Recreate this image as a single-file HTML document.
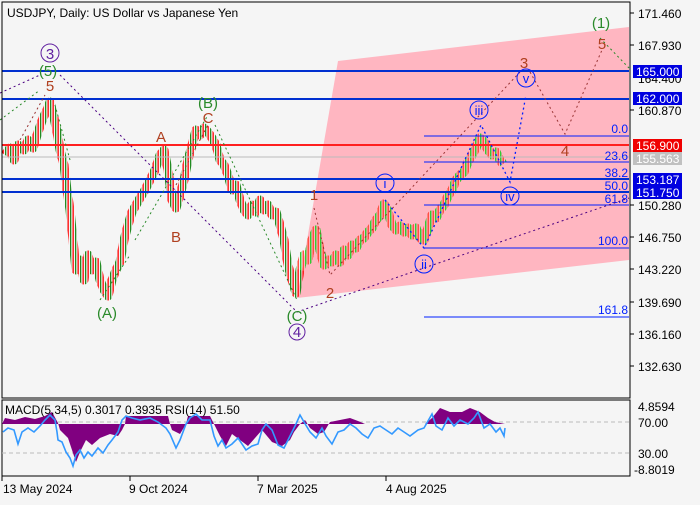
<!DOCTYPE html><html><head><meta charset="utf-8"><style>
body{margin:0;background:#f5f5f5;width:700px;height:500px;overflow:hidden;font-family:"Liberation Sans",sans-serif}
svg text{font-family:"Liberation Sans",sans-serif}
</style></head><body>
<svg width="700" height="500" xmlns="http://www.w3.org/2000/svg">
<defs>
<pattern id="pc" width="5" height="6" patternUnits="userSpaceOnUse"><rect x="0" width="1.3" height="6" fill="#228b22"/><rect x="2.5" width="1.3" height="6" fill="#ff0000"/></pattern>
<pattern id="pp" width="5" height="6" patternUnits="userSpaceOnUse"><rect x="0" width="1.3" height="6" fill="#33cc33"/><rect x="2.5" width="1.3" height="6" fill="#ff5040"/></pattern>
</defs>
<rect width="700" height="500" fill="#f5f5f5"/>
<polygon points="338,61 629,27 629,260 297,298" fill="#ffb6c1"/>
<polyline fill="none" stroke="url(#pc)" stroke-width="9" stroke-linejoin="round" points="5,155 10,148 14,160 18,145 24,150 28,140 33,148 38,132 43,118 47,110 50,102 54,118 57,132 60,150 64,165 67,190 70,210 73,240 76,270 80,260 84,280 88,255 92,270 96,262 100,280 104,290 108,296 112,280 116,270 120,262 124,240 128,225 132,212 136,205 140,198 145,190 150,180 155,170 160,155 164,150 168,170 172,200 176,208 180,195 184,180 188,160 192,145 196,130 200,135 204,128 208,132 212,138 216,145 220,160 224,165 228,175 232,190 236,185 240,200 244,210 248,215 252,205 256,212 260,200 264,210 268,205 272,215 276,212 280,225 284,240 288,265 292,280 296,293 300,270 304,255 308,260 312,240 316,230 320,250 324,265 328,260 332,262 336,255 340,262 344,250 348,255 352,245 356,248 360,240 364,238 368,232 372,228 376,220 380,215 384,204 388,212 392,225 396,230 400,226 404,232 408,228 412,235 416,228 420,238 424,240 428,228 432,215 436,218 440,210 444,205 448,196 452,190 456,180 460,175 464,172 468,162 472,155 476,148 480,138 484,142 488,150 492,155 496,152 500,160 503,164"/>
<polyline fill="none" stroke="url(#pp)" stroke-width="9" stroke-linejoin="round" points="300,270 304,255 308,260 312,240 316,230 320,250 324,265 328,260 332,262 336,255 340,262 344,250 348,255 352,245 356,248 360,240 364,238 368,232 372,228 376,220 380,215 384,204 388,212 392,225 396,230 400,226 404,232 408,228 412,235 416,228 420,238 424,240 428,228 432,215 436,218 440,210 444,205 448,196 452,190 456,180 460,175 464,172 468,162 472,155 476,148 480,138 484,142 488,150 492,155 496,152 500,160 503,164"/>
<g stroke-width="2">
<line x1="2" y1="71" x2="629" y2="71" stroke="#0030d0"/>
<line x1="2" y1="99" x2="629" y2="99" stroke="#0030d0"/>
<line x1="2" y1="145" x2="629" y2="145" stroke="#ff2020"/>
<line x1="2" y1="179" x2="629" y2="179" stroke="#0030d0"/>
<line x1="2" y1="192" x2="629" y2="192" stroke="#0030d0"/>
</g>
<line x1="2" y1="157" x2="629" y2="157" stroke="#bbb" stroke-width="1"/>
<g stroke="#0020ff" stroke-width="1">
<line x1="424" y1="136" x2="629" y2="136"/><line x1="424" y1="162" x2="629" y2="162"/>
<line x1="424" y1="205" x2="629" y2="205"/><line x1="424" y1="248" x2="629" y2="248"/>
<line x1="424" y1="317" x2="629" y2="317"/>
</g>
<g fill="#0020ff" font-size="12" text-anchor="end">
<text x="628" y="133">0.0</text><text x="628" y="160">23.6</text><text x="628" y="177">38.2</text>
<text x="628" y="190">50.0</text><text x="628" y="203">61.8</text><text x="628" y="245">100.0</text><text x="628" y="314">161.8</text>
</g>
<g fill="none" stroke-dasharray="2,3" stroke-width="1">
<polyline stroke="#4b0082" points="0,93 40,75"/>
<polyline stroke="#4b0082" points="60,75 297,312 424,268 629,198"/>
<polyline stroke="#2a8a2a" points="0,120 40,90"/>
<polyline stroke="#2a8a2a" points="55,105 70,160"/>
<polyline stroke="#2a8a2a" points="100,300 130,255"/>
<polyline stroke="#2a8a2a" points="135,240 208,115"/>
<polyline stroke="#2a8a2a" points="215,125 297,300"/>
<polyline stroke="#2a8a2a" points="600,38 629,68"/>
<polyline stroke="#993333" points="20,140 45,95"/>
<polyline stroke="#993333" points="176,185 208,125"/>
<polyline stroke="#993333" points="314,208 330,275 520,72"/>
<polyline stroke="#993333" points="530,72 565,134 602,50"/>
<polyline stroke="#0020ff" stroke-width="1.3" points="385,200 424,248 481,125 510,182 526,95"/>
</g>
<g font-size="15" text-anchor="middle">
<circle cx="50" cy="53" r="9" fill="#f5f5f5" stroke="#6020a0"/><text x="50" y="59" fill="#6020a0">3</text>
<text x="48" y="76" fill="#2a8a2a">(5)</text><text x="50" y="91" fill="#b04020">5</text>
<text x="161" y="142" fill="#b04020">A</text><text x="176" y="242" fill="#b04020">B</text>
<text x="208" y="123" fill="#b04020">C</text><text x="208" y="108" fill="#2a8a2a">(B)</text>
<text x="107" y="318" fill="#2a8a2a">(A)</text><text x="297" y="321" fill="#2a8a2a">(C)</text>
<circle cx="297" cy="332" r="8" fill="none" stroke="#6020a0"/><text x="297" y="337" fill="#6020a0">4</text>
<text x="314" y="200" fill="#b04020">1</text><text x="330" y="298" fill="#b04020">2</text>
<text x="524" y="68" fill="#b04020">3</text><text x="565" y="156" fill="#b04020">4</text>
<text x="602" y="49" fill="#b04020">5</text><text x="601" y="28" fill="#2a8a2a">(1)</text>
<g fill="none" stroke="#0020ff"><circle cx="385" cy="183" r="9"/><circle cx="424" cy="264" r="9"/><circle cx="479" cy="110" r="9"/><circle cx="526" cy="78" r="9"/><circle cx="510" cy="196" r="9"/></g>
<g fill="#0020ff" font-size="13"><text x="385" y="188">i</text><text x="424" y="269">ii</text><text x="479" y="115">iii</text><text x="526" y="83">v</text><text x="510" y="201">iv</text></g>
</g>
<text x="7" y="17" font-size="12" fill="#000">USDJPY, Daily:  US Dollar vs Japanese Yen</text>
<rect x="2" y="2" width="628" height="396" fill="none" stroke="#000"/>
<rect x="2" y="400" width="628" height="76" fill="none" stroke="#000"/>
<line x1="2" y1="422" x2="629" y2="422" stroke="#bbb" stroke-dasharray="4,3"/>
<line x1="2" y1="453" x2="629" y2="453" stroke="#bbb" stroke-dasharray="4,3"/>
<path fill="#800080" d="M2,424 L5,418 L15,420 L25,417 L35,419 L45,416 L52,412 L58,423 L60,430 L68,438 L72,450 L76,462 L80,452 L86,440 L92,445 L100,438 L110,434 L118,436 L122,430 L125,424 L126,416 L168,416 L170,424 L172,430 L180,434 L186,424 L188,416 L210,416 L214,424 L220,436 L226,446 L232,434 L240,440 L248,446 L255,438 L262,430 L272,442 L282,446 L290,440 L294,432 L300,424 L305,420 L310,428 L318,434 L324,432 L330,422 L340,420 L350,418 L358,421 L365,424 L380,424 L395,424 L410,424 L425,424 L432,418 L440,408 L450,412 L462,412 L470,408 L480,412 L488,418 L495,422 L505,424 Z"/>
<polyline fill="none" stroke="#3399ff" stroke-width="1.6" points="3,432 8,428 14,430 18,444 22,432 28,428 34,432 40,426 45,420 50,415 55,420 57,432 58,440 62,442 66,452 70,458 73,466 76,455 80,450 84,458 88,452 92,456 98,448 103,453 108,445 112,440 118,432 122,420 126,416 132,418 140,420 150,418 158,422 166,428 170,434 176,448 180,440 186,424 190,418 196,414 202,420 210,420 214,436 218,446 222,440 226,448 232,444 238,438 246,450 252,446 258,444 262,430 266,424 272,430 278,445 284,448 290,436 296,424 300,415 304,422 310,432 316,438 322,428 326,436 332,444 338,432 344,430 350,424 356,428 362,434 368,438 374,428 380,426 386,430 392,434 398,428 404,432 410,436 418,430 424,428 432,414 436,426 442,430 448,418 454,426 460,420 468,424 474,418 478,412 484,428 490,424 496,432 500,428 504,436 505,428"/>
<text x="5" y="414" font-size="12">MACD(5,34,5) 0.3017 0.3935 RSI(14) 51.50</text>
<g font-size="12" fill="#000">
<text x="638" y="18">171.460</text><text x="638" y="50">167.930</text><text x="638" y="83">164.400</text>
<text x="638" y="115">160.870</text><text x="638" y="210">150.280</text><text x="638" y="242">146.750</text>
<text x="638" y="274">143.220</text><text x="638" y="307">139.690</text><text x="638" y="339">136.160</text><text x="638" y="371">132.630</text>
<text x="638" y="411">4.8594</text><text x="638" y="427">70.00</text><text x="638" y="458">30.00</text><text x="634" y="474">-8.8019</text>
</g>
<g stroke="#000"><line x1="630" y1="13" x2="634" y2="13"/><line x1="630" y1="45" x2="634" y2="45"/><line x1="630" y1="110" x2="634" y2="110"/><line x1="630" y1="205" x2="634" y2="205"/><line x1="630" y1="237" x2="634" y2="237"/><line x1="630" y1="269" x2="634" y2="269"/><line x1="630" y1="302" x2="634" y2="302"/><line x1="630" y1="334" x2="634" y2="334"/><line x1="630" y1="366" x2="634" y2="366"/>
<line x1="2" y1="476" x2="2" y2="481"/><line x1="130" y1="476" x2="130" y2="481"/><line x1="258" y1="476" x2="258" y2="481"/><line x1="386" y1="476" x2="386" y2="481"/></g>
<g font-size="12" fill="#fff">
<rect x="633" y="65" width="49" height="13" fill="#0000e0"/><text x="636" y="76">165.000</text>
<rect x="633" y="92" width="49" height="13" fill="#0000e0"/><text x="636" y="103">162.000</text>
<rect x="633" y="139" width="49" height="13" fill="#f00000"/><text x="636" y="150">156.900</text>
<rect x="633" y="152" width="49" height="13" fill="#c0c0c0"/><text x="636" y="163">155.563</text>
<rect x="633" y="173" width="49" height="13" fill="#0000e0"/><text x="636" y="184">153.187</text>
<rect x="633" y="186" width="49" height="13" fill="#0000e0"/><text x="636" y="197">151.750</text>
</g>
<g font-size="12"><text x="3" y="493">13 May 2024</text><text x="129" y="493">9 Oct 2024</text><text x="257" y="493">7 Mar 2025</text><text x="386" y="493">4 Aug 2025</text></g>
</svg>
</body></html>
